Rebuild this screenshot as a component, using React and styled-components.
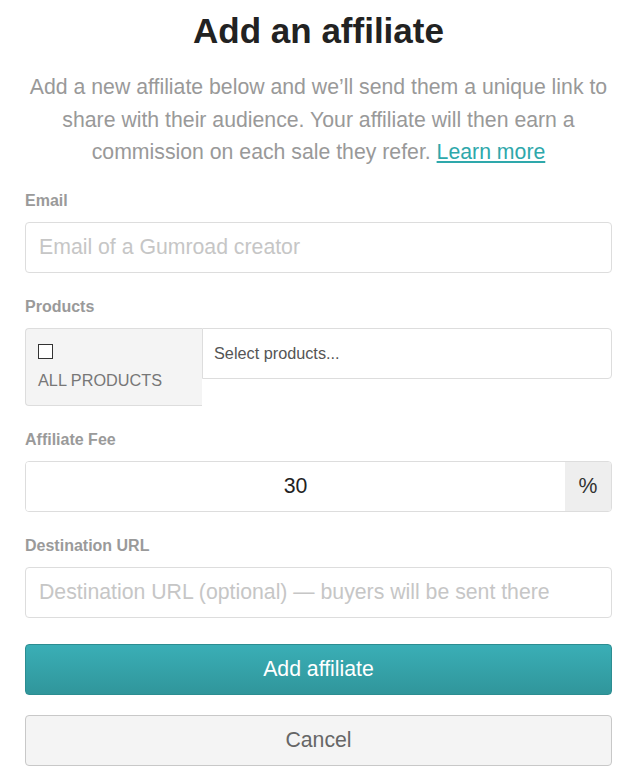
import React from "react";
import styled, { createGlobalStyle } from "styled-components";

const Global = createGlobalStyle`
  html, body { margin: 0; padding: 0; background: #fff; }
  body { font-family: "Liberation Sans", Arial, sans-serif; }
  * { box-sizing: border-box; }
`;

const Page = styled.div`
  padding: 10px 26px 0 25px;
  width: 638px;
`;

const Title = styled.h1`
  margin: 0;
  text-align: center;
  font-size: 35px;
  line-height: 42px;
  font-weight: 700;
  color: #222;
`;

const Lead = styled.p`
  margin: 19px 0 0;
  text-align: center;
  font-size: 21.25px;
  line-height: 32.5px;
  color: #999;
`;

const Link = styled.a`
  color: #2ea8ab;
  text-decoration: underline;
`;

const Form = styled.form`
  margin-top: 22px;
  display: flex;
  flex-direction: column;
  gap: 24px;
`;

const Field = styled.div`
  display: flex;
  flex-direction: column;
  gap: 11px;
`;

const Label = styled.label`
  font-size: 16px;
  line-height: 20px;
  font-weight: 700;
  color: #9a9a9a;
`;

const Input = styled.input`
  height: 51px;
  width: 100%;
  border: 1px solid #ddd;
  border-radius: 4px;
  padding: 0 13px;
  font-family: inherit;
  font-size: 21.25px;
  color: #222;
  outline: none;
  &::placeholder { color: #c6c6c6; }
`;

const Products = styled.div`
  display: flex;
  align-items: flex-start;
`;

const AllBox = styled.div`
  width: 177px;
  height: 78px;
  flex: none;
  background: #f4f4f4;
  border: 1px solid #ddd;
  border-right: none;
  border-radius: 4px 0 0 4px;
  padding: 15px 12px 0;
  display: flex;
  flex-direction: column;
  gap: 11px;
`;

const Check = styled.span`
  display: block;
  width: 15px;
  height: 15px;
  border: 1px solid #333;
  background: #fff;
`;

const AllText = styled.span`
  font-size: 16.25px;
  line-height: 20px;
  color: #777;
`;

const SelectBox = styled.div`
  flex: 1;
  height: 51px;
  border: 1px solid #ddd;
  border-radius: 0 4px 4px 0;
  background: #fff;
  display: flex;
  align-items: center;
  padding: 0 11px;
  font-size: 16.25px;
  color: #555;
`;

const Group = styled.div`
  display: flex;
  height: 51px;
  border: 1px solid #ddd;
  border-radius: 4px;
  overflow: hidden;
`;

const GroupInput = styled.input`
  flex: 1;
  border: none;
  outline: none;
  font-family: inherit;
  font-size: 21.25px;
  color: #222;
  text-align: center;
  padding: 0;
  min-width: 0;
`;

const Addon = styled.span`
  width: 46px;
  background: #eee;
  display: flex;
  align-items: center;
  justify-content: center;
  font-size: 21.25px;
  color: #333;
`;

const Buttons = styled.div`
  margin-top: 26px;
  display: flex;
  flex-direction: column;
  gap: 20px;
`;

const Button = styled.button`
  height: 51px;
  width: 100%;
  border-radius: 4px;
  font-family: inherit;
  font-size: 21.25px;
  cursor: pointer;
  border: 1px solid ${(p) => (p.$primary ? "#2c8d91" : "#c8c8c8")};
  color: ${(p) => (p.$primary ? "#fff" : "#666")};
  background: ${(p) =>
    p.$primary ? "linear-gradient(#3aaeb6, #30969b)" : "#f4f4f4"};
`;

export default function App() {
  return (
    <>
      <Global />
      <Page>
        <Title>Add an affiliate</Title>
        <Lead>
          Add a new affiliate below and we’ll send them a unique link to share
          with their audience. Your affiliate will then earn a commission on
          each sale they refer. <Link href="#">Learn more</Link>
        </Lead>
        <Form onSubmit={(e) => e.preventDefault()}>
          <Field>
            <Label>Email</Label>
            <Input placeholder="Email of a Gumroad creator" />
          </Field>
          <Field>
            <Label>Products</Label>
            <Products>
              <AllBox>
                <Check />
                <AllText>ALL PRODUCTS</AllText>
              </AllBox>
              <SelectBox>Select products...</SelectBox>
            </Products>
          </Field>
          <Field>
            <Label>Affiliate Fee</Label>
            <Group>
              <GroupInput defaultValue="30" />
              <Addon>%</Addon>
            </Group>
          </Field>
          <Field>
            <Label>Destination URL</Label>
            <Input placeholder="Destination URL (optional) — buyers will be sent there" />
          </Field>
        </Form>
        <Buttons>
          <Button $primary>Add affiliate</Button>
          <Button>Cancel</Button>
        </Buttons>
      </Page>
    </>
  );
}
